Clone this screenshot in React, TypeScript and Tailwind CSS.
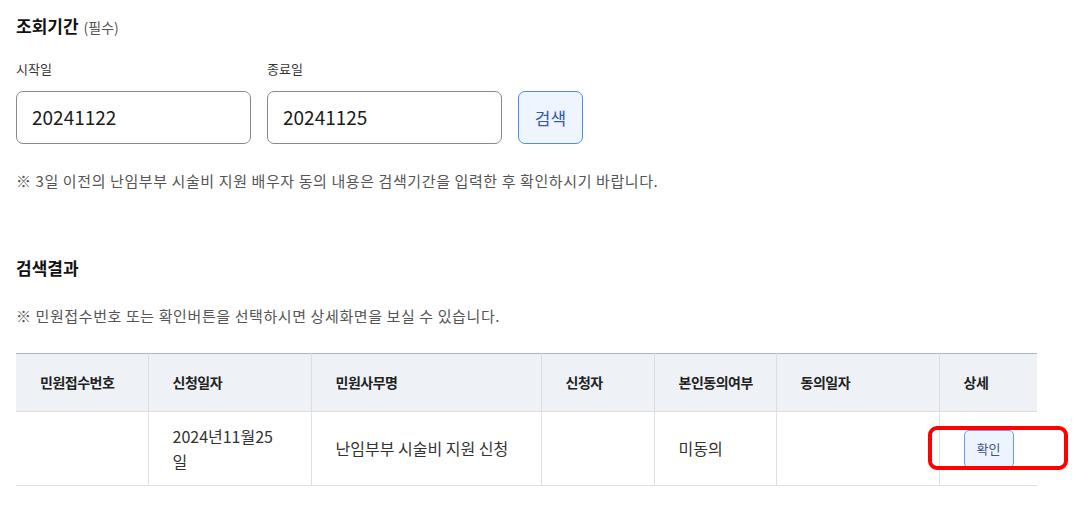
import React from 'react';

const FONT = { fontFamily: '"Noto Sans CJK KR", "Noto Sans", sans-serif' };

const columns = [
  { label: '민원접수번호', w: 'w-[132px]' },
  { label: '신청일자', w: 'w-[163px]' },
  { label: '민원사무명', w: 'w-[230px]' },
  { label: '신청자', w: 'w-[113px]' },
  { label: '본인동의여부', w: 'w-[122px]' },
  { label: '동의일자', w: 'w-[163px]' },
  { label: '상세', w: 'w-[98px]' },
];

function DateField({ label, value }: { label: string; value: string }) {
  return (
    <div className="flex flex-col">
      <label className="text-[13px] leading-[20px] text-[#333]">{label}</label>
      <div className="mt-[12px] flex h-[53px] w-[235px] items-center rounded-[7px] border border-[#8a8a8a] px-[15px] text-[19px] text-[#1a1a1a]">
        {value}
      </div>
    </div>
  );
}

export default function App() {
  return (
    <div className="min-h-screen bg-white px-4 text-[#222]" style={FONT}>
      {/* 조회기간 */}
      <div className="pt-[14px]">
        <h2 className="flex items-baseline gap-[5px] text-[17px] font-bold leading-[24px] text-[#111]">
          조회기간
          <span className="text-[14px] font-normal text-[#555]">(필수)</span>
        </h2>

        <div className="mt-[20px] flex items-end gap-4">
          <DateField label="시작일" value="20241122" />
          <DateField label="종료일" value="20241125" />
          <button className="h-[53px] w-[65px] rounded-[7px] border border-[#4d8af0] bg-[#eef5ff] text-[17px] text-[#3457b0]">
            검색
          </button>
        </div>

        <p className="mt-[26px] text-[15px] leading-[22px] tracking-[0.6px] text-[#555]">
          ※ 3일 이전의 난임부부 시술비 지원 배우자 동의 내용은 검색기간을 입력한 후 확인하시기 바랍니다.
        </p>
      </div>

      {/* 검색결과 */}
      <div className="mt-[64px]">
        <h2 className="text-[17px] font-bold leading-[24px] text-[#111]">검색결과</h2>
        <p className="mt-[25px] text-[15px] leading-[22px] tracking-[0.6px] text-[#555]">
          ※ 민원접수번호 또는 확인버튼을 선택하시면 상세화면을 보실 수 있습니다.
        </p>

        <table className="mt-[26px] w-[1021px] table-fixed border-collapse border-t border-t-[#a9b6c6] text-left">
          <thead>
            <tr className="h-[58px] bg-[#eef2f7]">
              {columns.map((c, i) => (
                <th
                  key={c.label}
                  className={`${c.w} border-b border-b-[#d9dee4] pl-6 pr-3 text-[14px] font-bold tracking-[-0.5px] text-[#222] ${
                    i > 0 ? 'border-l border-l-[#d9dee4]' : ''
                  }`}
                >
                  {c.label}
                </th>
              ))}
            </tr>
          </thead>
          <tbody>
            <tr className="h-[74px] border-b border-b-[#dcdfe3] text-[16px] leading-[25px] text-[#333]">
              <td className="px-6"></td>
              <td className="border-l border-l-[#dcdfe3] px-6">2024년11월25일</td>
              <td className="border-l border-l-[#dcdfe3] px-6">난임부부 시술비 지원 신청</td>
              <td className="border-l border-l-[#dcdfe3] px-6"></td>
              <td className="border-l border-l-[#dcdfe3] px-6">미동의</td>
              <td className="border-l border-l-[#dcdfe3] px-6"></td>
              <td className="border-l border-l-[#dcdfe3] px-6">
                <div className="relative inline-block align-middle">
                  <button className="h-[38px] w-[50px] rounded-[5px] border border-[#6b9af0] bg-[#eef4ff] text-[13px] text-[#44548a]">
                    확인
                  </button>
                  <span className="pointer-events-none absolute -top-[4px] -bottom-[2px] -left-[36px] -right-[54px] rounded-[9px] border-[4px] border-[#ff0000]" />
                </div>
              </td>
            </tr>
          </tbody>
        </table>
      </div>
    </div>
  );
}
